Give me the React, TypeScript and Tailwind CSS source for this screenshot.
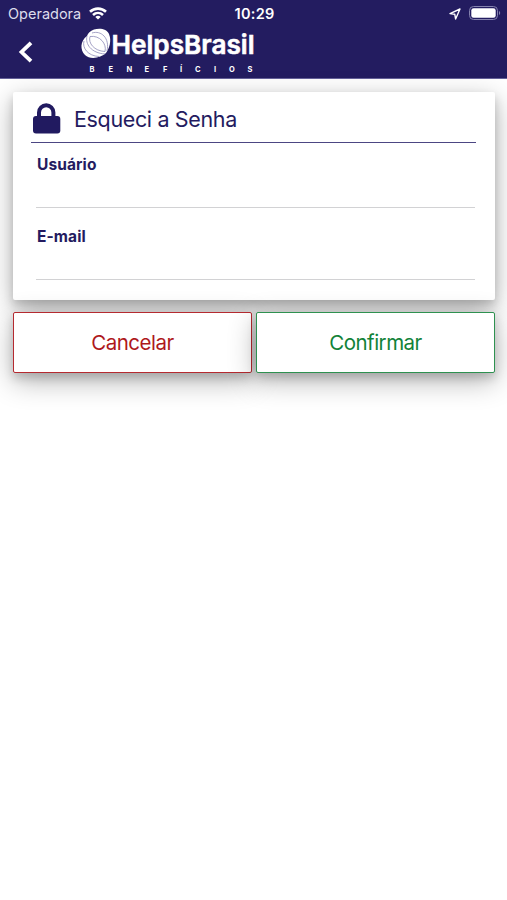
import React from "react";

const shadow =
  "shadow-[0_5px_10px_0_rgba(0,0,0,0.16),0_8px_28px_0_rgba(0,0,0,0.3)]";

function StatusBar() {
  return (
    <div className="flex h-[27px] items-center pt-px text-[14.5px] leading-none text-white">
      <div className="flex flex-1 items-center gap-[7px] pl-[8px]">
        <span className="w-[74px] whitespace-nowrap text-[#dddcec]">Operadora</span>
        <svg width="18" height="13" viewBox="0 0 18 13" fill="none" stroke="#fff" strokeWidth="2.6" className="-mt-px">
          <path d="M1 4.8C5.5.6 12.5.6 17 4.8" />
          <path d="M4 8C6.9 5.3 11.1 5.3 14 8" />
          <path d="M6.3 9.9C7.8 8.5 10.2 8.5 11.7 9.9L9 12.6Z" fill="#fff" stroke="none" />
        </svg>
      </div>
      <span className="w-[40px] whitespace-nowrap text-center font-semibold tracking-[0.3px]">10:29</span>
      <div className="flex flex-1 items-center justify-end gap-[8px] pr-[6px]">
        <svg width="12" height="12" viewBox="0 0 12 12" fill="none" stroke="#fff" strokeWidth="1.4" strokeLinejoin="round" className="-mt-px">
          <path d="M11 1 6.6 11 5.8 6.3 1 5.6Z" />
        </svg>
        <svg width="32" height="14" viewBox="0 0 32 14" className="-mt-[2px]">
          <rect x=".5" y=".5" width="28" height="13" rx="4" fill="none" stroke="#8582ae" />
          <rect x="2.3" y="2.3" width="24.4" height="9.4" rx="2.3" fill="#fff" />
          <path d="M30 5v4c1.6-.6 1.6-3.4 0-4Z" fill="#8582ae" />
        </svg>
      </div>
    </div>
  );
}

function Logo() {
  return (
    <svg width="178" height="50" viewBox="0 0 178 50" className="shrink-0" fill="#fff">
      <path d="M14 2.500C20 .5 27 2 29 7C32 14 29 22 26 26C21 31 10 33 5 28C0 23 0 14 7 9C8 6 10 4 14 2.500Z" />
      <g fill="none" stroke="#8e8bb8" strokeWidth=".8">
        <path d="M7 9C5 17 11 26 25 27" />
        <path d="M10 9.500C8 16 14 24 25 24.500C27 17 20 8 10 9.500Z" />
        <path d="M12 6C21 3 30 11 27 24" />
        <path d="M4 14C2 21 8 29 19 29.500" />
      </g>
      <text x="31.5" y="26.5" fontFamily="Inter, sans-serif" fontSize="26" fontWeight="600" stroke="#fff" strokeWidth=".6" textLength="143" lengthAdjust="spacingAndGlyphs">HelpsBrasil</text>
      <text x="9.5 28.5 46.5 64.5 83 100 115 134 149 167.5" y="45" fontFamily="Inter, sans-serif" fontSize="7.5" fontWeight="700">BENEFÍCIOS</text>
    </svg>
  );
}

function Field({ label }: { label: string }) {
  return (
    <label className="flex h-[72px] flex-col justify-between border-b border-[#d2d2d4] text-[15.5px] font-bold leading-[20px] tracking-[0.1px] text-[#241b60]">
      <span className="pl-px pt-[19px]">{label}</span>
      <input aria-label={label} className="h-[24px] w-full bg-transparent font-normal outline-none" />
    </label>
  );
}

export default function App() {
  return (
    <div className="min-h-[900px] w-full bg-white font-['Inter',sans-serif]">
      <header className="h-[79px] border-b border-[#65619a] bg-[#231c60]">
        <StatusBar />
        <div className="flex h-[51px] items-start">
          <button aria-label="Voltar" className="flex h-[50px] w-[80px] items-center pl-[18px]">
            <svg width="16" height="22" viewBox="0 0 16 22" fill="none" stroke="#fff" strokeWidth="3.8">
              <path d="M13 1.8 3.5 11 13 20.2" />
            </svg>
          </button>
          <Logo />
        </div>
      </header>
      <main className="pl-[13px] pr-[12px] pt-[13px]">
        <section className={`h-[208px] rounded-[2px] bg-white pl-[18px] pr-[19px] ${shadow}`}>
          <div className="flex h-[51px] items-center border-b border-[#4c4683] text-[#241b60]">
            <svg width="30" height="32" viewBox="0 0 30 32" className="mt-[4px]">
              <path d="M8 14V9.5a7.2 7.2 0 0 1 14.4 0V14" fill="none" stroke="#211a60" strokeWidth="4" />
              <rect x="2" y="13" width="27.3" height="17.5" rx="3" fill="#211a60" />
            </svg>
            <h1 className="ml-[13px] mt-[3px] whitespace-nowrap text-[21.5px] font-normal leading-[28px] tracking-[-0.35px]">Esqueci a Senha</h1>
          </div>
          <div className="-mt-[7px] pl-[5px] pr-px">
            <Field label="Usuário" />
            <Field label="E-mail" />
          </div>
        </section>
        <div className="mt-[12px] grid grid-cols-2 gap-[4px]">
          <button className={`h-[61px] rounded-[2px] border border-[#b52a30] bg-white pt-px text-[20.5px] tracking-[-0.5px] text-[#ae181b] ${shadow}`}>Cancelar</button>
          <button className={`h-[61px] rounded-[2px] border border-[#2e9150] bg-white pt-px text-[20.5px] tracking-[-0.5px] text-[#118238] ${shadow}`}>Confirmar</button>
        </div>
      </main>
    </div>
  );
}
